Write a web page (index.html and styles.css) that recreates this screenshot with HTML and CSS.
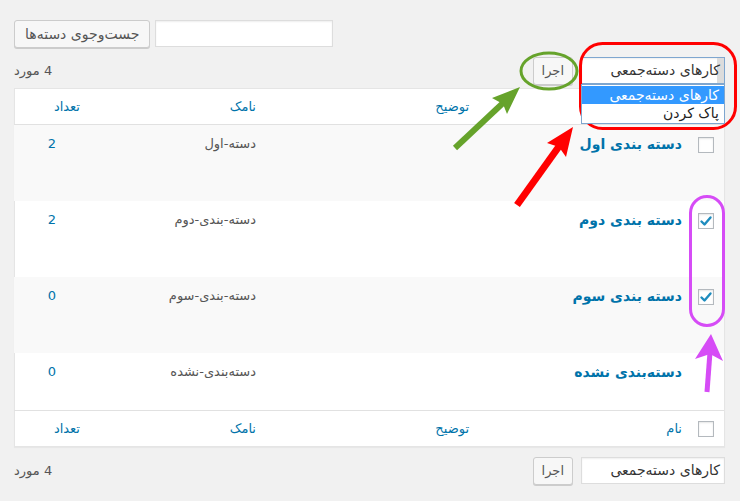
FILE: index.html
```html
<!DOCTYPE html>
<html lang="fa" dir="rtl">
<head>
  <meta charset="UTF-8">
  <meta name="viewport" content="width=device-width, initial-scale=1.0">
  <title>دسته‌ها</title>
  <link rel="stylesheet" href="styles.css">
</head>
<body>
  <div class="wrap">
    <!-- Search -->
    <form class="search-box">
      <input type="search" class="search-input">
      <button type="button" class="button search-button">جست‌وجوی دسته‌ها</button>
    </form>

    <!-- Top bulk actions (dropdown is open) -->
    <div class="tablenav top">
      <div class="bulk-actions">
        <div class="select focused">
          <span class="select-text">کارهای دسته‌جمعی</span>
          <ul class="select-list">
            <li class="selected">کارهای دسته‌جمعی</li>
            <li>پاک کردن</li>
          </ul>
        </div>
        <button type="button" class="button apply">اجرا</button>
      </div>
      <span class="items">4 مورد</span>
    </div>

    <!-- Terms table -->
    <div class="table-wrap">
      <table class="terms">
        <colgroup>
          <col class="col-check">
          <col class="col-name">
          <col class="col-desc">
          <col class="col-slug">
          <col class="col-posts">
        </colgroup>
        <thead>
          <tr>
            <th class="check"></th>
            <th></th>
            <th>توضیح</th>
            <th>نامک</th>
            <th class="posts">تعداد</th>
          </tr>
        </thead>
        <tbody>
          <tr class="alt">
            <td class="check"><span class="cb"></span></td>
            <td class="name">دسته بندی اول</td>
            <td></td>
            <td class="slug">دسته-اول</td>
            <td class="posts">2</td>
          </tr>
          <tr>
            <td class="check"><span class="cb checked"><svg viewBox="0 0 14 14"><polyline points="2.5,7.5 5.5,10.5 11.5,3.5"/></svg></span></td>
            <td class="name">دسته بندی دوم</td>
            <td></td>
            <td class="slug">دسته-بندی-دوم</td>
            <td class="posts">2</td>
          </tr>
          <tr class="alt">
            <td class="check"><span class="cb checked"><svg viewBox="0 0 14 14"><polyline points="2.5,7.5 5.5,10.5 11.5,3.5"/></svg></span></td>
            <td class="name">دسته بندی سوم</td>
            <td></td>
            <td class="slug">دسته-بندی-سوم</td>
            <td class="posts">0</td>
          </tr>
          <tr class="short">
            <td class="check"></td>
            <td class="name">دسته‌بندی نشده</td>
            <td></td>
            <td class="slug">دسته‌بندی-نشده</td>
            <td class="posts">0</td>
          </tr>
        </tbody>
        <tfoot>
          <tr>
            <th class="check"><span class="cb"></span></th>
            <th>نام</th>
            <th>توضیح</th>
            <th>نامک</th>
            <th class="posts">تعداد</th>
          </tr>
        </tfoot>
      </table>
    </div>

    <!-- Bottom bulk actions -->
    <div class="tablenav bottom">
      <div class="bulk-actions">
        <div class="select">
          <span class="select-text">کارهای دسته‌جمعی</span>
        </div>
        <button type="button" class="button apply">اجرا</button>
      </div>
      <span class="items">4 مورد</span>
    </div>
  </div>

  <!-- Hand drawn notes over the screenshot -->
  <svg class="notes" width="740" height="501" viewBox="0 0 740 501">
    <rect class="note-red" x="580.5" y="43.5" width="155" height="85" rx="22"/>
    <ellipse class="note-green" cx="549" cy="71" rx="28" ry="18"/>
    <rect class="note-purple" x="690.5" y="196.5" width="33" height="129" rx="16.5"/>

    <line class="shaft-green" x1="455" y1="148" x2="503" y2="103"/>
    <polygon class="head-green" points="520,87 492,98 503,104 507,114"/>

    <line class="shaft-red" x1="517" y1="205" x2="560" y2="145"/>
    <polygon class="head-red" points="573,127 547,143 559,147 566,157"/>

    <line class="shaft-purple" x1="707" y1="392" x2="710" y2="352"/>
    <polygon class="head-purple" points="711,334 695,359 710,354 723,361"/>
  </svg>
</body>
</html>
```

FILE: styles.css
```css
body {
  margin: 0;
  background: #f1f1f1;
  color: #444;
  font-family: "DejaVu Sans", sans-serif;
  font-size: 13px;
  direction: rtl;
  position: relative;
  height: 501px;
  overflow: hidden;
}

.wrap {
  padding: 20px 15px 0 14px;
}

/* Search */
.search-box {
  display: flex;
  justify-content: flex-end;
  gap: 5px;
  margin: 0;
}

.search-input {
  width: 178px;
  height: 27px;
  box-sizing: border-box;
  border: 1px solid #ddd;
  background: #fff;
  box-shadow: inset 0 1px 2px rgba(0, 0, 0, 0.07);
  margin: 0;
}

.button {
  height: 28px;
  padding: 0 10px;
  box-sizing: border-box;
  background: #f7f7f7;
  border: 1px solid #ccc;
  border-radius: 3px;
  box-shadow: 0 1px 0 #ccc;
  color: #555;
  font-family: inherit;
  font-size: 13px;
  margin: 0;
}

.search-button {
  font-size: 14px;
}

.button.apply {
  padding: 0 8px;
}

/* Bulk actions bar */
.tablenav {
  display: flex;
  justify-content: space-between;
  align-items: center;
  height: 27px;
}

.tablenav.top {
  margin-top: 9px;
}

.tablenav.bottom {
  margin-top: 10px;
}

.bulk-actions {
  display: flex;
  align-items: center;
  gap: 8px;
}

.items {
  color: #555;
}

.select {
  position: relative;
  width: 144px;
  height: 27px;
  box-sizing: border-box;
  border: 1px solid #ddd;
  background: #fff;
  box-shadow: inset 0 1px 2px rgba(0, 0, 0, 0.07);
  font-size: 14px;
  line-height: 25px;
  padding-right: 4px;
  white-space: nowrap;
}

.select.focused {
  border-color: #7ea6cf;
}

.select.focused::before {
  content: "";
  position: absolute;
  top: 0;
  right: 0;
  bottom: 0;
  width: 7px;
  background: #dcdcdc;
}

.select-text {
  position: relative;
  color: #333;
}

.select-list {
  position: absolute;
  top: 26px;
  right: -1px;
  left: -1px;
  margin: 0;
  padding: 1px 0;
  list-style: none;
  background: #fff;
  border: 1px solid #7ea6cf;
  z-index: 2;
}

.select-list li {
  height: 18px;
  line-height: 18px;
  padding-right: 5px;
  color: #222;
}

.select-list li.selected {
  background: #3399ff;
  color: #fff;
}

/* Table */
.table-wrap {
  margin-top: 4px;
  background: #fff;
  border: 1px solid #e5e5e5;
  box-shadow: 0 1px 1px rgba(0, 0, 0, 0.04);
}

.terms {
  width: 100%;
  border-spacing: 0;
  table-layout: fixed;
}

.col-check { width: 32px; }
.col-name { width: 213px; }
.col-desc { width: 213px; }
.col-slug { width: 176px; }
.col-posts { width: 76px; }

.terms th {
  height: 35px;
  padding: 0 10px;
  text-align: right;
  font-weight: normal;
  color: #0073aa;
  vertical-align: middle;
}

.terms thead th {
  border-bottom: 1px solid #e1e1e1;
}

.terms tfoot th {
  border-top: 1px solid #e1e1e1;
}

.terms th.posts {
  padding-right: 10px;
}

.terms td {
  height: 76px;
  box-sizing: border-box;
  padding: 9px 10px;
  line-height: 20px;
  vertical-align: top;
}

.terms tr.alt td {
  background: #f9f9f9;
}

.terms tr.short td {
  height: 57px;
}

.terms .check {
  padding: 0 10px 0 0;
}

.terms td.check {
  padding-top: 12px;
  line-height: 0;
}

.terms th.check {
  line-height: 0;
}

.terms td.name {
  color: #0073aa;
  font-weight: bold;
  font-size: 14px;
}

.terms td.slug {
  color: #555;
}

.terms td.posts {
  color: #0073aa;
  text-align: center;
  padding: 9px 0;
}

.cb {
  display: inline-block;
  position: relative;
  width: 16px;
  height: 16px;
  box-sizing: border-box;
  border: 1px solid #b4b9be;
  background: #fff;
  box-shadow: inset 0 1px 2px rgba(0, 0, 0, 0.1);
}

.cb svg {
  position: absolute;
  top: 0;
  left: 0;
  width: 14px;
  height: 14px;
}

.cb polyline {
  fill: none;
  stroke: #1e8cbe;
  stroke-width: 2.4;
  stroke-linecap: round;
  stroke-linejoin: round;
}

/* Notes drawn over the page */
.notes {
  position: absolute;
  top: 0;
  left: 0;
  pointer-events: none;
}

.note-red,
.note-green,
.note-purple {
  fill: none;
  stroke-width: 3;
}

.note-red { stroke: #ff0000; }
.note-green { stroke: #66a32b; }
.note-purple { stroke: #d64cf6; }

.shaft-green { stroke: #66a32b; stroke-width: 6; }
.shaft-red { stroke: #ff0000; stroke-width: 7; }
.shaft-purple { stroke: #d64cf6; stroke-width: 5; }

.head-green { fill: #66a32b; }
.head-red { fill: #ff0000; }
.head-purple { fill: #d64cf6; }
```
